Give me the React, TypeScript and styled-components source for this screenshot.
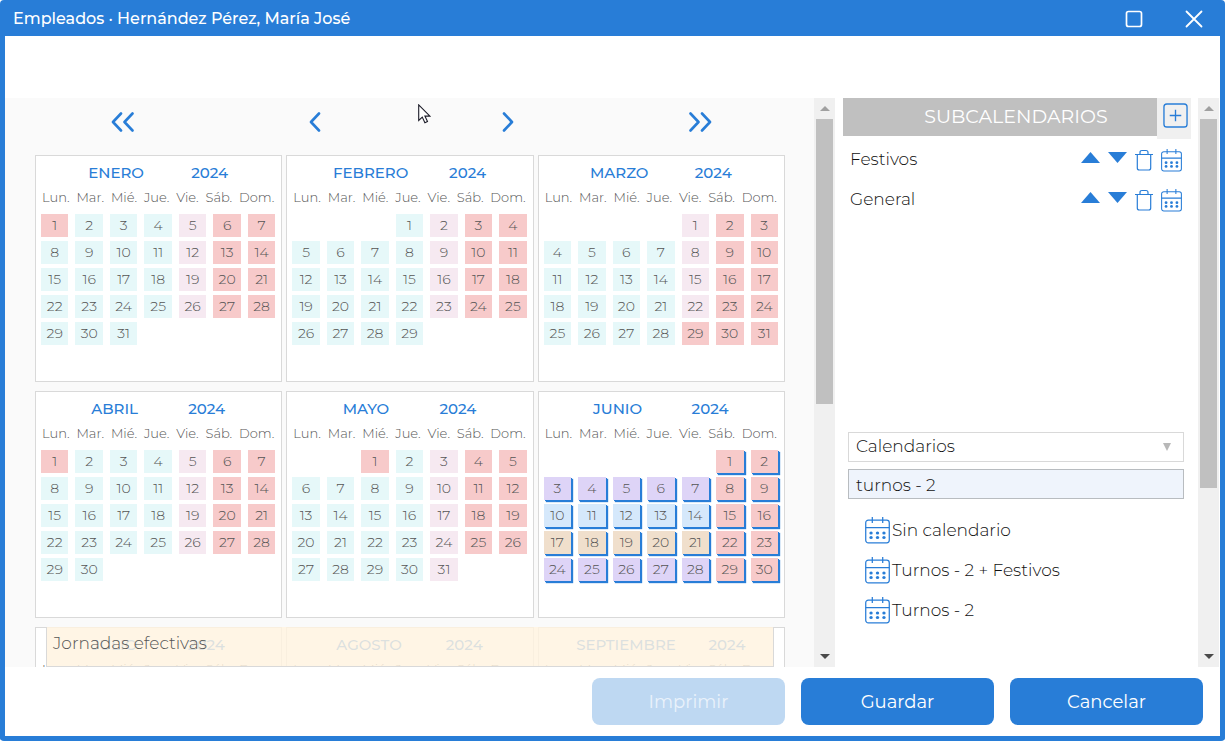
import React from "react";
import styled, { createGlobalStyle, css } from "styled-components";

const blue = "#287dd7";
const line = "#d9d9d9";

const GlobalStyle = createGlobalStyle`
  *, *::before, *::after { box-sizing: border-box; }
  body { margin: 0; background: #fff; }
  body, button, input, select { font-family: Montserrat, Inter, sans-serif; }
  button { border: 0; padding: 0; background: none; color: inherit; cursor: pointer; }
  svg { display: block; }
`;

const Window = styled.div`
  position: relative;
  display: flex;
  flex-direction: column;
  height: 100vh;
  border: 5px solid ${blue};
  border-top: 0;
  border-radius: 4px;
  overflow: hidden;
  background: #fff;
`;

const TitleBar = styled.header`
  flex: none;
  display: flex;
  align-items: center;
  height: 36px;
  padding: 2px 17px 0 8px;
  background: ${blue};
  color: #fff;
`;

const Title = styled.h1`
  flex: 1;
  margin: 0;
  font-size: 16px;
  line-height: 24px;
  font-weight: 500;
`;

const WindowControls = styled.div`
  display: flex;
  gap: 42px;
`;

const Body = styled.div`
  flex: 1;
  min-height: 0;
  display: flex;
  margin-top: 62px;
`;

const YearPane = styled.main`
  position: relative;
  flex: 1;
  min-width: 0;
  overflow: hidden;
  background: #fafafa;
`;

const YearNav = styled.nav`
  display: flex;
  height: 47px;
  margin: 0 17px 10px 21px;
`;

const NavButton = styled.button`
  flex: 1;
  display: flex;
  align-items: center;
  justify-content: center;
`;

const Months = styled.div`
  display: grid;
  grid-template-columns: repeat(3, 1fr);
  gap: 9px 4px;
  padding: 0 29px 0 30px;
`;

const MonthCard = styled.section`
  height: 227px;
  padding: 6px 6px 0 5px;
  border: 1px solid ${line};
  background: #fff;
`;

const MonthHead = styled.h2`
  display: flex;
  justify-content: space-evenly;
  margin: 0;
  color: ${blue};
  font-size: 15px;
  line-height: 22px;
  font-weight: 500;
`;

const MonthTable = styled.table`
  display: block;
  color: #555;
`;

const WeekHead = styled.thead`
  display: block;
  margin-bottom: 4px;
  tr { display: flex; justify-content: space-between; padding: 0 1px; }
  th { padding: 0; font-size: 13px; line-height: 26px; font-weight: 300; }
`;

const Weeks = styled.tbody`
  display: grid;
  gap: 4px;
  tr { display: grid; grid-template-columns: repeat(7, 1fr); gap: 7px; }
`;

type Tone = "work" | "friday" | "holiday" | "violet" | "sky" | "sand";
const tones: Record<Tone, string> = {
  work: "#e6f8f9",
  friday: "#f6e9f1",
  holiday: "#f7caca",
  violet: "#ded4f7",
  sky: "#d5e8fb",
  sand: "#f0dfcc",
};

const Day = styled.td<{ $tone?: Tone; $raised?: boolean }>`
  height: 23px;
  padding: 0;
  font-size: 14px;
  line-height: 23px;
  font-weight: 300;
  text-align: center;
  ${(p) => p.$tone && css`background: ${tones[p.$tone]};`}
  ${(p) => p.$raised && css`box-shadow: 1px 1px 0 ${blue}, 2px 2px 1px ${blue};`}
`;

const Summary = styled.div`
  position: absolute;
  left: 41px;
  right: 40px;
  bottom: 0;
  height: 40px;
  padding: 0 6px;
  border: 1px solid ${line};
  border-top: 0;
  background: rgba(255, 243, 224, 0.84);
  color: #555;
  font-size: 17px;
  line-height: 32px;
  font-weight: 300;
`;

const Track = styled.div`
  flex: none;
  display: flex;
  flex-direction: column;
  align-items: center;
  width: 21px;
  background: #f0f0f0;
`;

const TrackEnd = styled.div`
  flex: none;
  display: grid;
  place-items: center;
  height: 21px;
`;

const TrackRun = styled.div`
  flex: 1;
  width: 17px;
`;

const Thumb = styled.div<{ $share: number }>`
  height: ${(p) => p.$share}%;
  background: #c0c0c0;
`;

const Side = styled.aside`
  flex: none;
  display: flex;
  gap: 7px;
  width: 385px;
  padding: 0 1px 0 8px;
`;

const SidePane = styled.div`
  flex: 1;
  display: flex;
  flex-direction: column;
`;

const SideHead = styled.div`
  display: flex;
  align-items: flex-start;
  height: 41px;
`;

const SideTitle = styled.h2`
  flex: 1;
  margin: 0;
  padding-left: 32px;
  background: #c0c0c0;
  color: #fff;
  font-size: 19px;
  line-height: 38px;
  font-weight: 400;
  text-align: center;
`;

const AddButton = styled.button`
  display: flex;
  justify-content: center;
  align-items: flex-start;
  width: 34px;
  height: 41px;
  padding: 5px 0 0 3px;
  background: #f0f0f0;
`;

const SubList = styled.ul`
  height: 293px;
  margin: 0;
  padding: 0 9px 0 7px;
  list-style: none;
`;

const SubItem = styled.li`
  display: flex;
  align-items: center;
  height: 40px;
  color: #111;
  font-size: 17px;
  font-weight: 300;
`;

const SubName = styled.span`
  flex: 1;
`;

const SubActions = styled.div`
  display: flex;
  align-items: center;
  gap: 8px;
  padding-top: 2px;
`;

const Picker = styled.div`
  display: grid;
  gap: 7px;
  padding: 0 7px 0 5px;
`;

const SelectBox = styled.div`
  position: relative;
`;

const fieldStyle = css`
  display: block;
  width: 100%;
  height: 30px;
  margin: 0;
  border-radius: 0;
  outline: 0;
  color: #111;
  font-size: 17px;
  font-weight: 300;
`;

const Select = styled.select`
  ${fieldStyle}
  appearance: none;
  padding: 0 7px 2px;
  border: 1px solid ${line};
  background: #fff;
`;

const SelectArrow = styled.svg`
  position: absolute;
  top: 11px;
  right: 13px;
  pointer-events: none;
`;

const Search = styled.input`
  ${fieldStyle}
  padding: 2px 7px 0;
  border: 1px solid #b8bcc0;
  background: #eff4fc;
`;

const Results = styled.ul`
  display: grid;
  margin: 11px 0 0;
  padding: 0 0 0 22px;
  list-style: none;
`;

const ResultButton = styled.button`
  display: flex;
  align-items: center;
  gap: 2px;
  height: 40px;
  color: #111;
  font-size: 17px;
  font-weight: 300;
`;

const Footer = styled.footer`
  flex: none;
  display: flex;
  justify-content: flex-end;
  gap: 16px;
  padding: 11px 17px;
`;

const Action = styled.button`
  width: 193px;
  height: 47px;
  border-radius: 8px;
  background: ${blue};
  color: #fff;
  font-size: 18px;
  font-weight: 400;
  &:disabled { background: #bed8f2; color: #eaf2fb; cursor: default; }
`;

const Pointer = styled.svg`
  position: absolute;
  top: 104px;
  left: 413px;
  pointer-events: none;
`;

function Chevrons({ double, flip }: { double?: boolean; flip?: boolean }) {
  const w = double ? 23 : 12;
  return (
    <svg width={w} height="20" viewBox={`0 0 ${w} 20`} fill="none" stroke={blue} strokeWidth="2.600" strokeLinecap="round" strokeLinejoin="round">
      <g transform={flip ? `translate(${w} 0) scale(-1 1)` : undefined}>
        <path d="M10 1.500 2 10l8 8.500" />
        {double && <path d="M21.500 1.500l-8 8.500 8 8.500" />}
      </g>
    </svg>
  );
}

function CalendarIcon({ width, height }: { width: number; height: number }) {
  return (
    <svg width={width} height={height} viewBox="0 0 24 27" preserveAspectRatio="none" fill="none" stroke={blue} strokeWidth="1.200">
      <rect x="0.700" y="3.200" width="22.600" height="22.600" rx="2.500" />
      <path d="M.7 10.700h22.600M7 0v6M17 0v6" />
      <g fill={blue} stroke="none">
        {[16, 20.5].map((y) => [5.8, 12, 18.2].map((x) => <circle key={`${x}-${y}`} cx={x} cy={y} r="1.600" />))}
      </g>
    </svg>
  );
}

function TrashIcon() {
  return (
    <svg width="18" height="22" viewBox="0 0 18 22" fill="none" stroke={blue} strokeWidth="1.200">
      <path d="M0 5.500h18M2.300 5.500v13.500q0 2 2 2h9.400q2 0 2-2V5.500M5 5.500V3.500q0-2 2-2h4q2 0 2 2v2" />
    </svg>
  );
}

function Triangle({ down }: { down?: boolean }) {
  return (
    <svg width="19" height="16" viewBox="0 0 19 16">
      <path d={down ? "M0 0h19l-9.500 11z" : "M0 11h19L9.500 0z"} fill={blue} />
    </svg>
  );
}

function ScrollTrack({ share }: { share: number }) {
  return (
    <Track aria-hidden="true">
      <TrackEnd>
        <svg width="10" height="5" viewBox="0 0 10 5"><path d="M0 5h10L5 0z" fill="#a0a0a0" /></svg>
      </TrackEnd>
      <TrackRun><Thumb $share={share} /></TrackRun>
      <TrackEnd>
        <svg width="10" height="5" viewBox="0 0 10 5"><path d="M0 0h10L5 5z" fill="#4a4a4a" /></svg>
      </TrackEnd>
    </Track>
  );
}

const monthNames = ["ENERO", "FEBRERO", "MARZO", "ABRIL", "MAYO", "JUNIO", "JULIO", "AGOSTO", "SEPTIEMBRE"];
const weekdays = ["Lun.", "Mar.", "Mié.", "Jue.", "Vie.", "Sáb.", "Dom."];
const year = 2024;
const publicHolidays = ["0-1", "2-29", "3-1", "4-1"];
const shiftWeeks: Tone[] = ["violet", "violet", "sky", "sand", "violet"];

function weeksOf(month: number): number[][] {
  const offset = (new Date(year, month, 1).getDay() + 6) % 7;
  const count = new Date(year, month + 1, 0).getDate();
  const rows = Math.ceil((offset + count) / 7);
  return Array.from({ length: rows }, (_, r) =>
    Array.from({ length: 7 }, (_, c) => {
      const day = r * 7 + c - offset + 1;
      return day > 0 && day <= count ? day : 0;
    })
  );
}

function toneOf(month: number, week: number, column: number, day: number): Tone {
  if (column > 4 || publicHolidays.includes(`${month}-${day}`)) return "holiday";
  if (month === 5) return shiftWeeks[week];
  return column === 4 ? "friday" : "work";
}

function Month({ month }: { month: number }) {
  return (
    <MonthCard>
      <MonthHead><span>{monthNames[month]}</span><span>{year}</span></MonthHead>
      <MonthTable aria-label={`${monthNames[month]} ${year}`}>
        <WeekHead>
          <tr>{weekdays.map((d) => <th key={d} scope="col">{d}</th>)}</tr>
        </WeekHead>
        <Weeks>
          {weeksOf(month).map((week, r) => (
            <tr key={r}>
              {week.map((day, c) =>
                day ? (
                  <Day key={c} $tone={toneOf(month, r, c, day)} $raised={month === 5}>{day}</Day>
                ) : (
                  <Day key={c} />
                )
              )}
            </tr>
          ))}
        </Weeks>
      </MonthTable>
    </MonthCard>
  );
}

export default function App() {
  return (
    <>
      <GlobalStyle />
      <Window>
        <TitleBar>
          <Title>Empleados · Hernández Pérez, María José</Title>
          <WindowControls>
            <button aria-label="Maximizar">
              <svg width="18" height="18" viewBox="0 0 18 18" fill="none" stroke="#fff" strokeWidth="1.700"><rect x="1.500" y="1.500" width="15" height="15" rx="2" /></svg>
            </button>
            <button aria-label="Cerrar">
              <svg width="18" height="18" viewBox="0 0 18 18" fill="none" stroke="#fff" strokeWidth="1.800" strokeLinecap="round"><path d="M1.500 1.500l15 15M16.500 1.500l-15 15" /></svg>
            </button>
          </WindowControls>
        </TitleBar>
        <Body>
          <YearPane>
            <YearNav aria-label="Año">
              <NavButton aria-label="Año anterior"><Chevrons double /></NavButton>
              <NavButton aria-label="Mes anterior"><Chevrons /></NavButton>
              <NavButton aria-label="Mes siguiente"><Chevrons flip /></NavButton>
              <NavButton aria-label="Año siguiente"><Chevrons double flip /></NavButton>
            </YearNav>
            <Months>
              {monthNames.map((name, i) => <Month key={name} month={i} />)}
            </Months>
            <Summary>Jornadas efectivas</Summary>
          </YearPane>
          <ScrollTrack share={54} />
          <Side>
            <SidePane>
              <SideHead>
                <SideTitle>SUBCALENDARIOS</SideTitle>
                <AddButton aria-label="Añadir subcalendario">
                  <svg width="25" height="25" viewBox="0 0 26 26" fill="none" stroke={blue} strokeWidth="1.400"><rect x="1" y="1" width="24" height="24" rx="3" /><path d="M13 7v12M7 13h12" /></svg>
                </AddButton>
              </SideHead>
              <SubList>
                {["Festivos", "General"].map((name) => (
                  <SubItem key={name}>
                    <SubName>{name}</SubName>
                    <SubActions>
                      <button aria-label={`Subir ${name}`}><Triangle /></button>
                      <button aria-label={`Bajar ${name}`}><Triangle down /></button>
                      <button aria-label={`Eliminar ${name}`}><TrashIcon /></button>
                      <button aria-label={`Calendario ${name}`}><CalendarIcon width={21} height={23} /></button>
                    </SubActions>
                  </SubItem>
                ))}
              </SubList>
              <Picker>
                <SelectBox>
                  <Select aria-label="Tipo" defaultValue="Calendarios"><option>Calendarios</option></Select>
                  <SelectArrow width="8" height="8" viewBox="0 0 8 8" aria-hidden="true"><path d="M0 0h8L4 8z" fill="#b8b8b8" /></SelectArrow>
                </SelectBox>
                <Search aria-label="Buscar calendario" defaultValue="turnos - 2" />
              </Picker>
              <Results>
                {["Sin calendario", "Turnos - 2 + Festivos", "Turnos - 2"].map((name) => (
                  <li key={name}>
                    <ResultButton><CalendarIcon width={25} height={27} />{name}</ResultButton>
                  </li>
                ))}
              </Results>
            </SidePane>
            <ScrollTrack share={70} />
          </Side>
        </Body>
        <Footer>
          <Action disabled>Imprimir</Action>
          <Action>Guardar</Action>
          <Action>Cancelar</Action>
        </Footer>
        <Pointer width="13" height="20" viewBox="0 0 13 20" aria-hidden="true">
          <path d="M.7.900v15.600l3.600-3.400 2.600 5.700 2.600-1.200-2.600-5.500h5z" fill="#fff" stroke="#1c1c28" strokeWidth="1.100" />
        </Pointer>
      </Window>
    </>
  );
}
